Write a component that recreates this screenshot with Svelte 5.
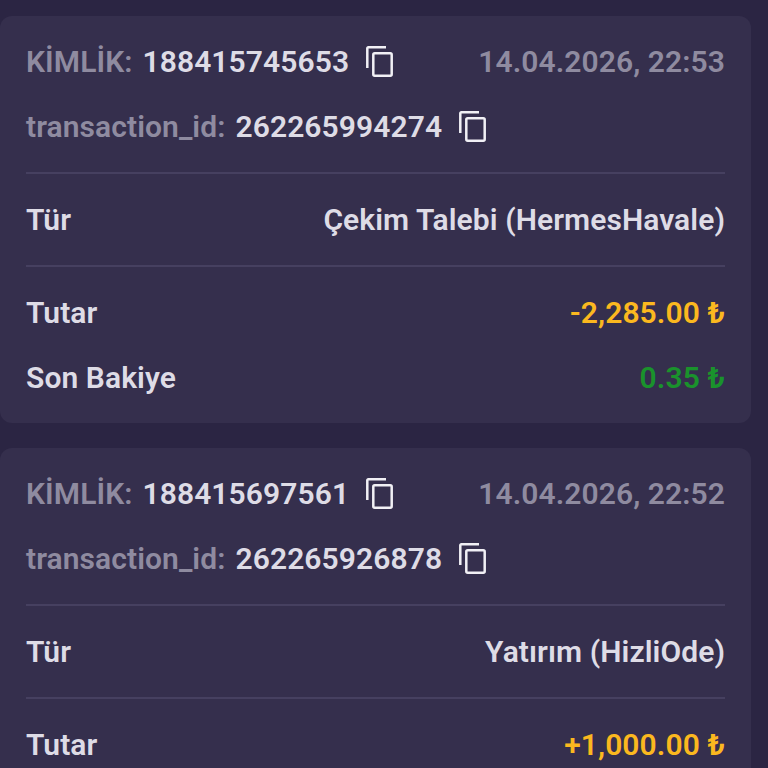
<script>
  const cards = [
    { id: '188415745653', date: '14.04.2026, 22:53', tx: '262265994274', type: 'Çekim Talebi (HermesHavale)', amount: '-2,285.00 ₺', balance: '0.35 ₺' },
    { id: '188415697561', date: '14.04.2026, 22:52', tx: '262265926878', type: 'Yatırım (HizliOde)', amount: '+1,000.00 ₺', balance: '1,000.35 ₺' }
  ];
</script>

{#snippet copy()}
  <svg class="copy" viewBox="0 0 27 31" width="27" height="31" aria-hidden="true">
    <path d="M1.3 22V2.3a1 1 0 0 1 1-1H20" fill="none" stroke="currentColor" stroke-width="2.5" />
    <rect x="7.3" y="7.3" width="18.4" height="22.4" rx="1.4" fill="none" stroke="currentColor" stroke-width="2.5" />
  </svg>
{/snippet}

<div class="page">
  {#each cards as c}
    <section class="card">
      <div class="row head">
        <div class="id"><span class="muted">KİMLİK:</span> <span class="num">{c.id}</span>{@render copy()}</div>
        <span class="date">{c.date}</span>
      </div>
      <div class="row head tx">
        <div class="id"><span class="muted">transaction_id:</span> <span class="num">{c.tx}</span>{@render copy()}</div>
      </div>
      <div class="row line"><span>Tür</span><span>{c.type}</span></div>
      <div class="row amount"><span>Tutar</span><span class="gold">{c.amount}</span></div>
      <div class="row balance"><span>Son Bakiye</span><span class="green">{c.balance}</span></div>
    </section>
  {/each}
</div>

<style>
  :global(body) {
    background: #2b2543;
  }
  .page {
    height: 768px;
    overflow: hidden;
    padding-top: 16px;
    box-sizing: border-box;
    width: 751px;
    font-family: Roboto, sans-serif;
    font-weight: 600;
    font-size: 30px;
    letter-spacing: 0.08px;
    color: #dedce6;
    display: flex;
    flex-direction: column;
    gap: 25px;
  }
  .card {
    flex: none;
    background: #352f4d;
    border-radius: 12px;
    padding: 0 26px;
    height: 407px;
    box-sizing: border-box;
  }
  .row {
    display: flex;
    justify-content: space-between;
    align-items: center;
  }
  .head {
    height: 65px;
    padding-top: 13px;
    margin-bottom: -13px;
  }
  .tx {
    padding-bottom: 13px;
    border-bottom: 2px solid #464060;
    margin-bottom: 0;
  }
  .id {
    display: flex;
    align-items: center;
    gap: 10px;
  }
  .muted, .date {
    color: #8f8ba0;
  }
  .copy {
    color: #f1f0f5;
    margin-left: 7px;
    flex: none;
  }
  .line {
    height: 90px;
    border-bottom: 2px solid #464060;
    padding-bottom: 1px;
  }
  .amount {
    height: 91px;
  }
  .balance {
    height: 38px;
  }
  .gold { color: #fbb81f; }
  .green { color: #1a922c; }
</style>
